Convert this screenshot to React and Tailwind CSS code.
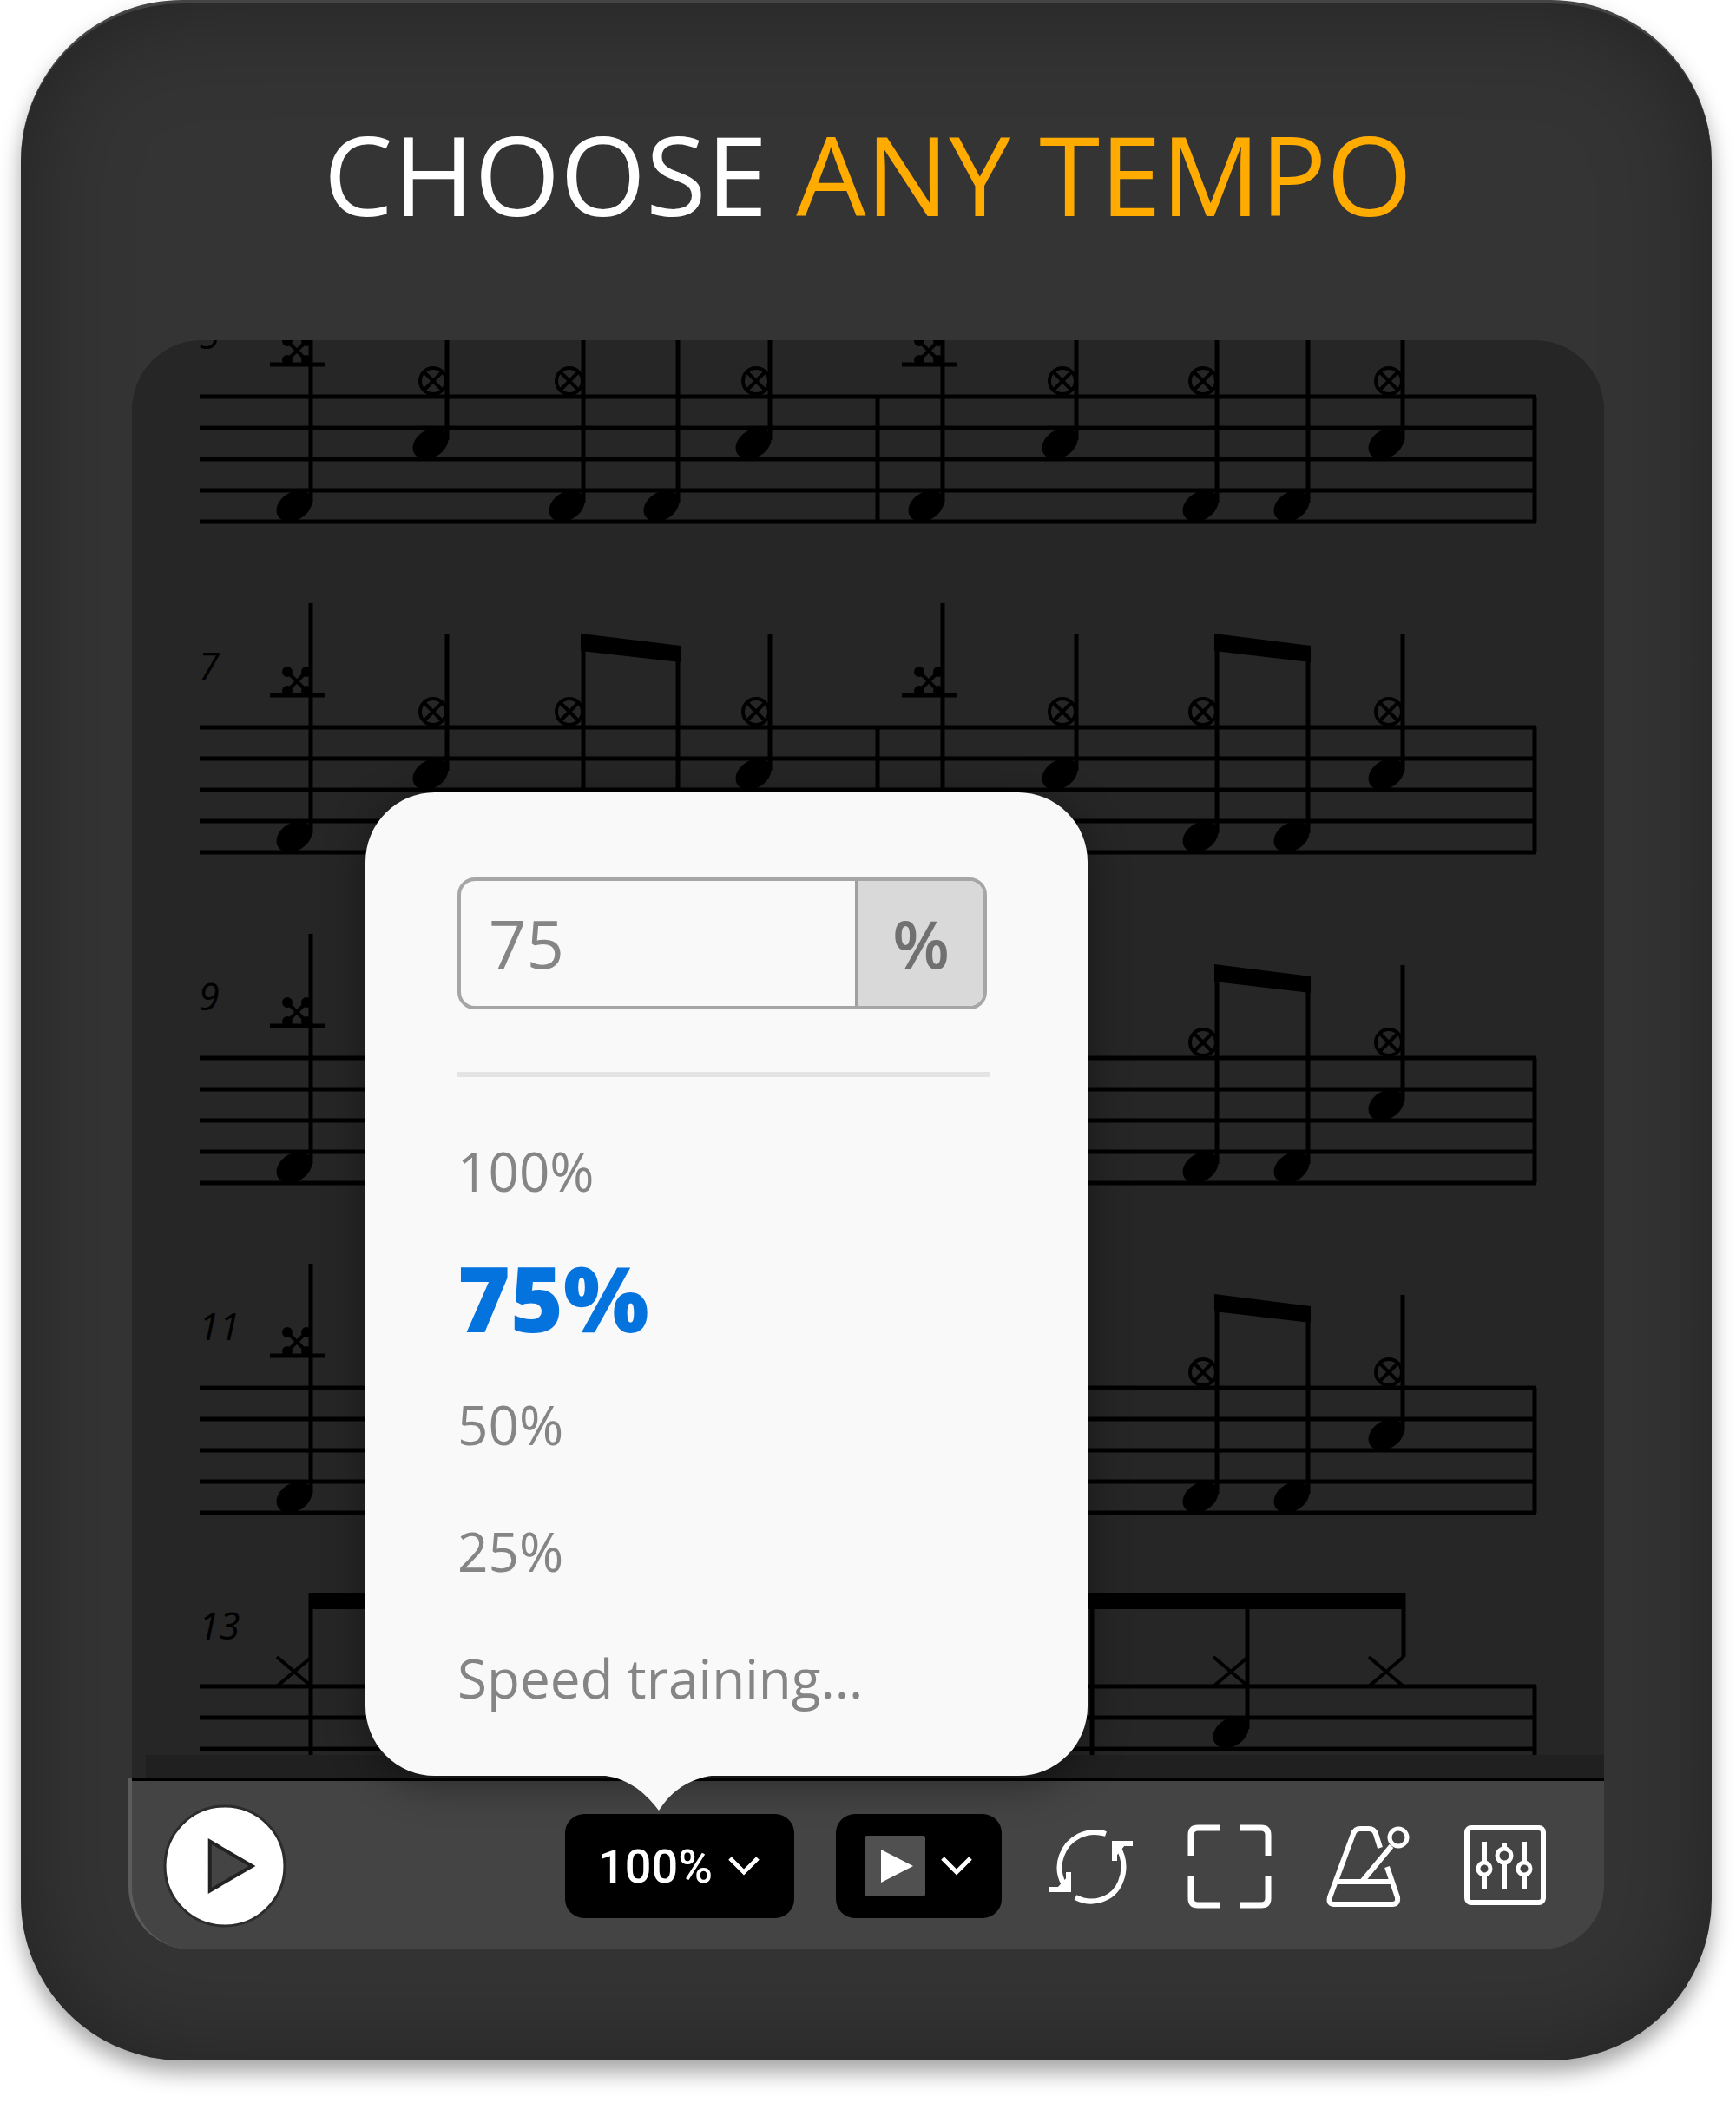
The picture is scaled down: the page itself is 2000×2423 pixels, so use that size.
import React, { useState } from 'react';
import clsx from 'clsx';

const STAFF_LEFT = 78;
const STAFF_RIGHT = 1618;

// Stem positions of the five beats in each measure
const MEASURES = [
  [206, 363, 520, 629, 735],
  [934, 1088, 1250, 1355, 1464],
];

const SYSTEMS = [
  { number: '5', y: 65 },
  { number: '7', y: 446 },
  { number: '9', y: 827 },
  { number: '11', y: 1207 },
];

const TEMPOS = ['100%', '75%', '50%', '25%', 'Speed training...'];

const NoteHead = ({ x, y }) => (
  <ellipse cx={x} cy={y} rx="22" ry="16" transform={`rotate(-32 ${x} ${y})`} fill="#000" />
);

const CircleCross = ({ x, y }) => (
  <g fill="none" stroke="#000">
    <circle cx={x} cy={y} r="15" strokeWidth="4" />
    <path d={`M${x - 10} ${y - 10}l20 20m0 -20l-20 20`} strokeWidth="4" />
  </g>
);

const CrashHead = ({ x, y }) => (
  <g stroke="#000" strokeWidth="4">
    <path d={`M${x - 12} ${y - 12}l24 24m0 -24l-24 24`} />
    <circle cx={x - 11} cy={y - 11} r="4" />
    <circle cx={x + 11} cy={y - 11} r="4" />
    <circle cx={x - 11} cy={y + 11} r="4" />
    <circle cx={x + 11} cy={y + 11} r="4" />
    <path d={`M${x - 31} ${y + 16}h64`} strokeWidth="5" />
  </g>
);

const ThinCross = ({ x, y }) => (
  <path d={`M${x - 20} ${y - 17}l40 34m0 -34l-40 34`} stroke="#000" strokeWidth="4" />
);

const StaffLines = ({ y, count }) => (
  <g stroke="#000" strokeWidth="5">
    {Array.from({ length: count }, (_, i) => (
      <path key={i} d={`M${STAFF_LEFT} ${y + i * 36}H${STAFF_RIGHT}`} />
    ))}
  </g>
);

const MeasureNumber = ({ y, children }) => (
  <text x="77" y={y} fontSize="43" className="font-['Open_Sans',sans-serif] font-medium italic">
    {children}
  </text>
);

const Measure = ({ stems, y }) => {
  const [a, b, c, d, e] = stems;
  return (
    <g>
      <g stroke="#000" strokeWidth="5">
        <path d={`M${a} ${y - 143}V${y + 122}`} />
        <path d={`M${b} ${y - 107}V${y + 50}`} />
        <path d={`M${c} ${y - 107}V${y + 122}`} />
        <path d={`M${d} ${y - 94}V${y + 122}`} />
        <path d={`M${e} ${y - 107}V${y + 50}`} />
      </g>
      <path d={`M${c - 3} ${y - 108}L${d + 3} ${y - 94}V${y - 75}L${c - 3} ${y - 88}Z`} fill="#000" />
      <CrashHead x={a - 16} y={y - 53} />
      <CircleCross x={b - 16} y={y - 18} />
      <CircleCross x={c - 16} y={y - 18} />
      <CircleCross x={e - 16} y={y - 18} />
      <NoteHead x={a - 19} y={y + 126} />
      <NoteHead x={b - 19} y={y + 54} />
      <NoteHead x={c - 19} y={y + 126} />
      <NoteHead x={d - 19} y={y + 126} />
      <NoteHead x={e - 19} y={y + 54} />
    </g>
  );
};

const SheetMusic = () => (
  <svg viewBox="0 0 1696 1656" className="block w-full h-auto bg-[#262626]" role="img" aria-label="Drum score">
    <rect x="16" y="1630" width="1680" height="26" fill="#202020" />
    {SYSTEMS.map(({ number, y }) => (
      <g key={number}>
        <StaffLines y={y} count={5} />
        <path d={`M859 ${y}v144M1616 ${y}v144`} stroke="#000" strokeWidth="5" />
        {MEASURES.map((stems) => (
          <Measure key={stems[0]} stems={stems} y={y} />
        ))}
        <MeasureNumber y={y - 55}>{number}</MeasureNumber>
      </g>
    ))}

    {/* Last system runs under the toolbar */}
    <StaffLines y={1551} count={3} />
    <MeasureNumber y={1497}>13</MeasureNumber>
    <path d="M204 1443H1467V1462H204Z" />
    <path d="M206 1443V1630M1106 1443V1630M1285 1443V1600M1465 1443V1517M1616 1551V1630" stroke="#000" strokeWidth="5" />
    <ThinCross x={187} y={1534} />
    <ThinCross x={1266} y={1534} />
    <ThinCross x={1445} y={1534} />
    <NoteHead x={1266} y={1604} />
  </svg>
);

const Chevron = () => (
  <svg viewBox="0 0 40 24" className="w-10 h-6" fill="none" stroke="#fff" strokeWidth="5">
    <path d="M4 3L20 19L36 3" />
  </svg>
);

const IconButton = ({ label, children }) => (
  <button type="button" aria-label={label} className="shrink-0">
    <svg viewBox="0 0 96 96" className="block size-24 overflow-visible" fill="none" stroke="#fff" strokeWidth="7">
      {children}
    </svg>
  </button>
);

const TempoMenu = ({ tempo, onSelect }) => (
  <div className="absolute bottom-full -left-[230px] mb-11 w-[832px] rounded-[80px] bg-[#f9f9f9] pt-[98px] pb-10 pl-[106px] pr-28 shadow-[0_8px_48px_rgba(0,0,0,0.4)]">
    <div className="mr-1 flex h-[152px] overflow-hidden rounded-[20px] border-4 border-[#a6a6a6]">
      <input
        aria-label="Tempo"
        defaultValue="75"
        className="min-w-0 flex-1 bg-transparent pl-8 text-[76px] text-[#858585] outline-none"
      />
      <span className="flex w-[148px] items-center justify-center border-l-4 border-[#a0a0a0] bg-[#d9d9d9] text-[76px] font-semibold text-[#707070]">
        %
      </span>
    </div>
    <hr className="mt-[72px] mb-[35px] h-1.5 border-0 bg-[#e4e4e4]" />
    <ul>
      {TEMPOS.map((item) => (
        <li key={item}>
          <button
            type="button"
            onClick={() => onSelect(item)}
            className={clsx(
              'flex h-[146px] w-full items-center whitespace-nowrap',
              item === tempo ? 'text-[104px] font-extrabold text-[#0573de]' : 'text-[62px] text-[#858585]'
            )}
          >
            {item}
          </button>
        </li>
      ))}
    </ul>
    <svg viewBox="0 0 136 42" className="absolute top-full left-[270px] -mt-px h-[42px] w-[136px]" fill="#f9f9f9">
      <path d="M0 0C30 3 50 17 68 41C84 17 104 3 136 0Z" />
    </svg>
  </div>
);

const Toolbar = () => {
  const [tempo, setTempo] = useState('75%');

  return (
    <div className="-ml-1 flex h-[198px] items-center justify-between rounded-b-[72px] border-l-4 border-[#5c5c5c] bg-[#444] pt-1.5 pl-9 pr-16 shadow-[inset_0_4px_0_#000]">
      <button type="button" aria-label="Play" className="shrink-0">
        <svg viewBox="0 0 140 140" className="block size-[142px]">
          <circle cx="70" cy="70" r="68" fill="#fff" stroke="#2c2c2c" strokeWidth="3" />
          <path d="M53 42L101 70L53 98Z" fill="#444" stroke="#222" strokeWidth="4" />
        </svg>
      </button>

      <div className="flex items-center gap-16">
        <div className="-mr-2.5 flex items-center gap-12">
          <div className="relative">
            <button
              type="button"
              aria-haspopup="true"
              className="flex h-[120px] w-[264px] items-center justify-center gap-4 rounded-[22px] bg-black font-['Roboto',sans-serif] text-[54px] font-medium text-white"
            >
              100%
              <Chevron />
            </button>
            <TempoMenu tempo={tempo} onSelect={setTempo} />
          </div>
          <button
            type="button"
            aria-label="Video"
            className="flex h-[120px] w-[191px] items-center justify-center gap-4 rounded-[22px] bg-black"
          >
            <svg viewBox="0 0 70 70" className="size-[70px]">
              <rect width="70" height="70" rx="3" fill="#505050" />
              <path d="M19 16L56 35L19 54Z" fill="#fff" />
            </svg>
            <Chevron />
          </button>
        </div>

        <IconButton label="Loop">
          <path d="M66 11C44 4 22 16 15 36C11 47 12 58 17 68" strokeWidth="6" />
          <path d="M31 84C50 94 75 87 83 66C89 51 87 37 79 24" strokeWidth="6" />
          <path d="M1 75H23V55M97 22H76V42" strokeWidth="6" />
          <path d="M10 73H24V58ZM88 24H76V39Z" fill="#fff" stroke="none" />
        </IconButton>

        <IconButton label="Full screen">
          <path d="M4 36V12Q4 4 12 4H37M61 4H85Q93 4 93 12V36M93 60V85Q93 93 85 93H61M37 93H12Q4 93 4 85V60" />
        </IconButton>

        <IconButton label="Metronome">
          <path d="M62 27L57 11Q55 5 49 5H39Q33 5 31 11L4 84Q2 92 9 92H76Q83 92 82 84L70 49M12 66H76M41 66L75 25" strokeWidth="6" />
          <circle cx="83" cy="15" r="10" strokeWidth="5" />
        </IconButton>

        <IconButton label="Mixer">
          <rect x="2" y="4" width="88" height="86" rx="5" strokeWidth="6" />
          <path d="M22 20V43M22 59V75M45 21V29M45 45V75M68 20V43M68 59V75" strokeWidth="6" />
          <circle cx="22" cy="51" r="7" strokeWidth="5" />
          <circle cx="45" cy="36" r="8" strokeWidth="5" />
          <circle cx="68" cy="51" r="7" strokeWidth="5" />
        </IconButton>
      </div>
    </div>
  );
};

const App = () => (
  <main className="bg-white pl-6 pr-7 pb-12 font-['Open_Sans',sans-serif]">
    <section className="rounded-[186px] border-t-4 border-[#444] bg-[#343434] pt-[116px] pb-32 pl-32 pr-[124px] shadow-[inset_0_0_120px_rgba(0,0,0,0.35),0_14px_24px_rgba(0,0,0,0.35)]">
      <h1 className="mb-28 text-center text-[127px] leading-[160px] text-white">
        CHOOSE <span className="text-[#ffab00]">ANY TEMPO</span>
      </h1>
      <div>
        <div className="overflow-hidden rounded-t-[80px]">
          <SheetMusic />
        </div>
        <Toolbar />
      </div>
    </section>
  </main>
);

export default App;
